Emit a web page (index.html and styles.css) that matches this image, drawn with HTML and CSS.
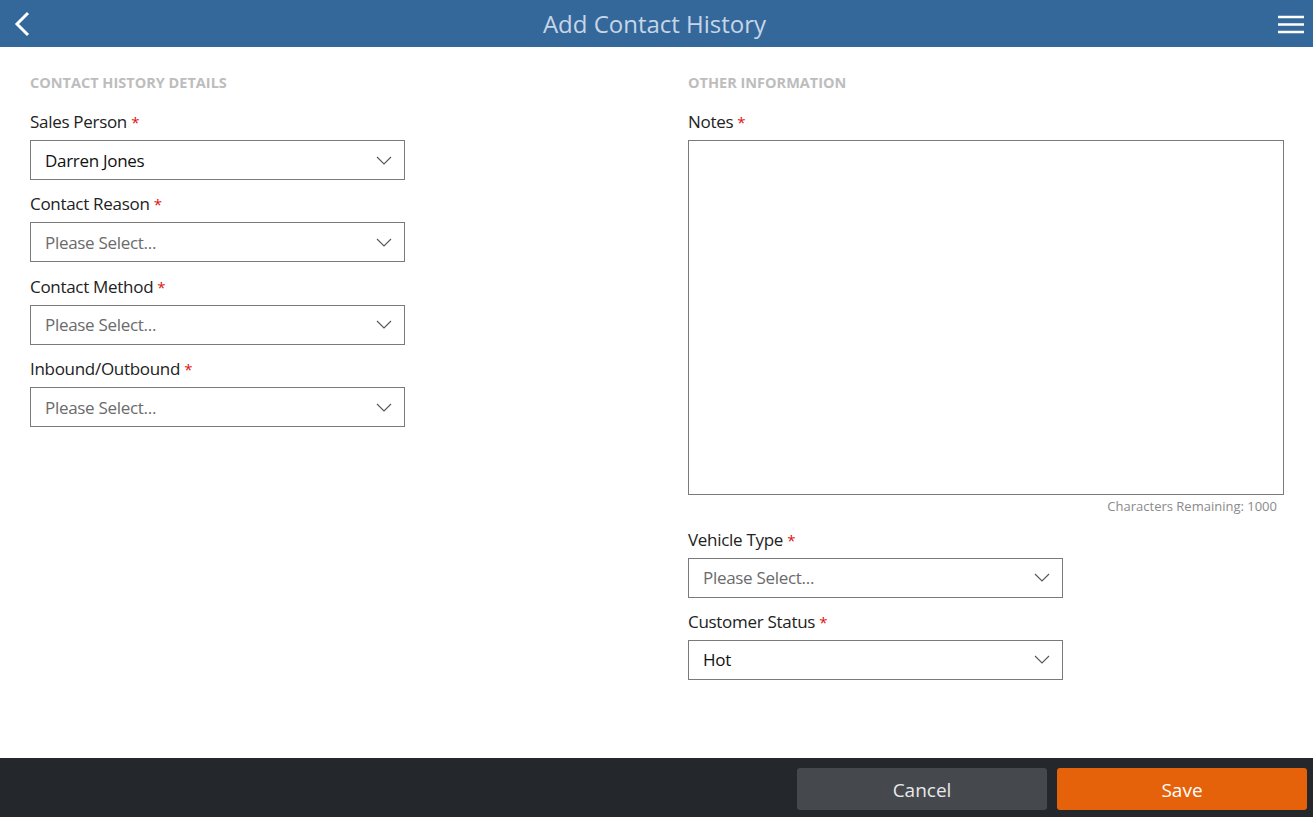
FILE: index.html
```html
<!DOCTYPE html>
<html lang="en">
<head>
    <meta charset="UTF-8">
    <meta name="viewport" content="width=device-width, initial-scale=1.0">
    <title>Add Contact History</title>
    <link rel="stylesheet" href="styles.css">
</head>
<body>
    <div class="app">
        <header class="top-bar">
            <button type="button" class="icon-btn">
                <svg width="20" height="26" viewBox="0 0 20 26"><path d="M16 2 L5 13 L16 24" fill="none" stroke="#fff" stroke-width="3"/></svg>
            </button>
            <h1>Add Contact History</h1>
            <button type="button" class="icon-btn">
                <svg width="28" height="22" viewBox="0 0 28 22"><path d="M1 4 H27 M1 11.5 H27 M1 19 H27" stroke="#fff" stroke-width="2.6"/></svg>
            </button>
        </header>

        <main class="form-body">
            <section class="col">
                <h2 class="section-title">Contact History Details</h2>

                <label class="field-label">Sales Person <span class="req">*</span></label>
                <div class="select"><span>Darren Jones</span><svg class="chev" width="16" height="9" viewBox="0 0 16 9"><path d="M1 1 L8 8 L15 1" fill="none" stroke="#555" stroke-width="1.1"/></svg></div>

                <label class="field-label">Contact Reason <span class="req">*</span></label>
                <div class="select placeholder"><span>Please Select...</span><svg class="chev" width="16" height="9" viewBox="0 0 16 9"><path d="M1 1 L8 8 L15 1" fill="none" stroke="#555" stroke-width="1.1"/></svg></div>

                <label class="field-label">Contact Method <span class="req">*</span></label>
                <div class="select placeholder"><span>Please Select...</span><svg class="chev" width="16" height="9" viewBox="0 0 16 9"><path d="M1 1 L8 8 L15 1" fill="none" stroke="#555" stroke-width="1.1"/></svg></div>

                <label class="field-label">Inbound/Outbound <span class="req">*</span></label>
                <div class="select placeholder"><span>Please Select...</span><svg class="chev" width="16" height="9" viewBox="0 0 16 9"><path d="M1 1 L8 8 L15 1" fill="none" stroke="#555" stroke-width="1.1"/></svg></div>
            </section>

            <section class="col">
                <h2 class="section-title">Other Information</h2>

                <label class="field-label">Notes <span class="req">*</span></label>
                <textarea class="notes"></textarea>
                <div class="char-count">Characters Remaining: 1000</div>

                <label class="field-label">Vehicle Type <span class="req">*</span></label>
                <div class="select placeholder"><span>Please Select...</span><svg class="chev" width="16" height="9" viewBox="0 0 16 9"><path d="M1 1 L8 8 L15 1" fill="none" stroke="#555" stroke-width="1.1"/></svg></div>

                <label class="field-label">Customer Status <span class="req">*</span></label>
                <div class="select"><span>Hot</span><svg class="chev" width="16" height="9" viewBox="0 0 16 9"><path d="M1 1 L8 8 L15 1" fill="none" stroke="#555" stroke-width="1.1"/></svg></div>
            </section>
        </main>

        <footer class="bottom-bar">
            <button type="button" class="btn btn-cancel">Cancel</button>
            <button type="button" class="btn btn-save">Save</button>
        </footer>
    </div>
</body>
</html>
```

FILE: styles.css
```css
* {
    box-sizing: border-box;
}
body {
    margin: 0;
    font-family: "Open Sans", "Noto Sans", sans-serif;
    color: #222;
    background: #fff;
}
.app {
    height: 817px;
    display: flex;
    flex-direction: column;
}
.top-bar {
    height: 47px;
    background: #34679a;
    display: flex;
    align-items: center;
    justify-content: space-between;
    padding: 0 8px 0 12px;
}
.top-bar h1 {
    margin: 0;
    font-size: 24px;
    font-weight: 400;
    color: #c6d6e8;
    letter-spacing: 0;
}
.icon-btn {
    background: none;
    border: none;
    padding: 0;
    display: flex;
    cursor: pointer;
}
.form-body {
    flex: 1;
    display: grid;
    grid-template-columns: 658px 596px;
    padding: 0 29px 0 30px;
}
.col {
    display: flex;
    flex-direction: column;
    align-items: flex-start;
}
.section-title {
    margin: 26px 0 0;
    height: 20px;
    font-size: 14.5px;
    font-weight: 700;
    color: #bdbdbd;
    text-transform: uppercase;
    letter-spacing: 0;
}
.field-label {
    display: block;
    margin-top: 12px;
    height: 35px;
    line-height: 33px;
    font-size: 17px;
    color: #222;
    letter-spacing: -0.3px;
}
.req {
    color: #e01010;
    font-size: 15px;
}
.select {
    width: 375px;
    height: 40px;
    border: 1px solid #7a7a7a;
    display: flex;
    align-items: center;
    justify-content: space-between;
    padding: 0 12px 0 14px;
    font-size: 17px;
    color: #111;
    letter-spacing: -0.3px;
}
.select.placeholder {
    color: #6b6b6b;
}
.select + .field-label {
    margin-top: 2.4px;
    height: 40px;
    line-height: 44px;
}
.notes {
    width: 596px;
    height: 355px;
    border: 1px solid #7a7a7a;
    resize: none;
    margin: 0;
    font-family: inherit;
}
.char-count {
    align-self: flex-end;
    margin-right: 7px;
    margin-top: 3px;
    height: 17px;
    font-size: 13px;
    line-height: 17px;
    color: #8a8a8a;
    letter-spacing: 0;
}
.char-count + .field-label {
    margin-top: 2.6px;
    height: 40px;
    line-height: 44px;
}
.bottom-bar {
    height: 59px;
    background: #24272b;
    display: flex;
    justify-content: flex-end;
    align-items: flex-start;
    gap: 10px;
    padding: 10px 6px 0 0;
}
.btn {
    width: 250px;
    height: 42px;
    border: none;
    border-radius: 3px;
    color: #fff;
    font-family: inherit;
    font-size: 19px;
    padding-top: 3px;
    cursor: pointer;
}
.btn-cancel {
    background: #45484d;
    color: #e8e8e8;
}
.btn-save {
    background: #e5620a;
}
```
